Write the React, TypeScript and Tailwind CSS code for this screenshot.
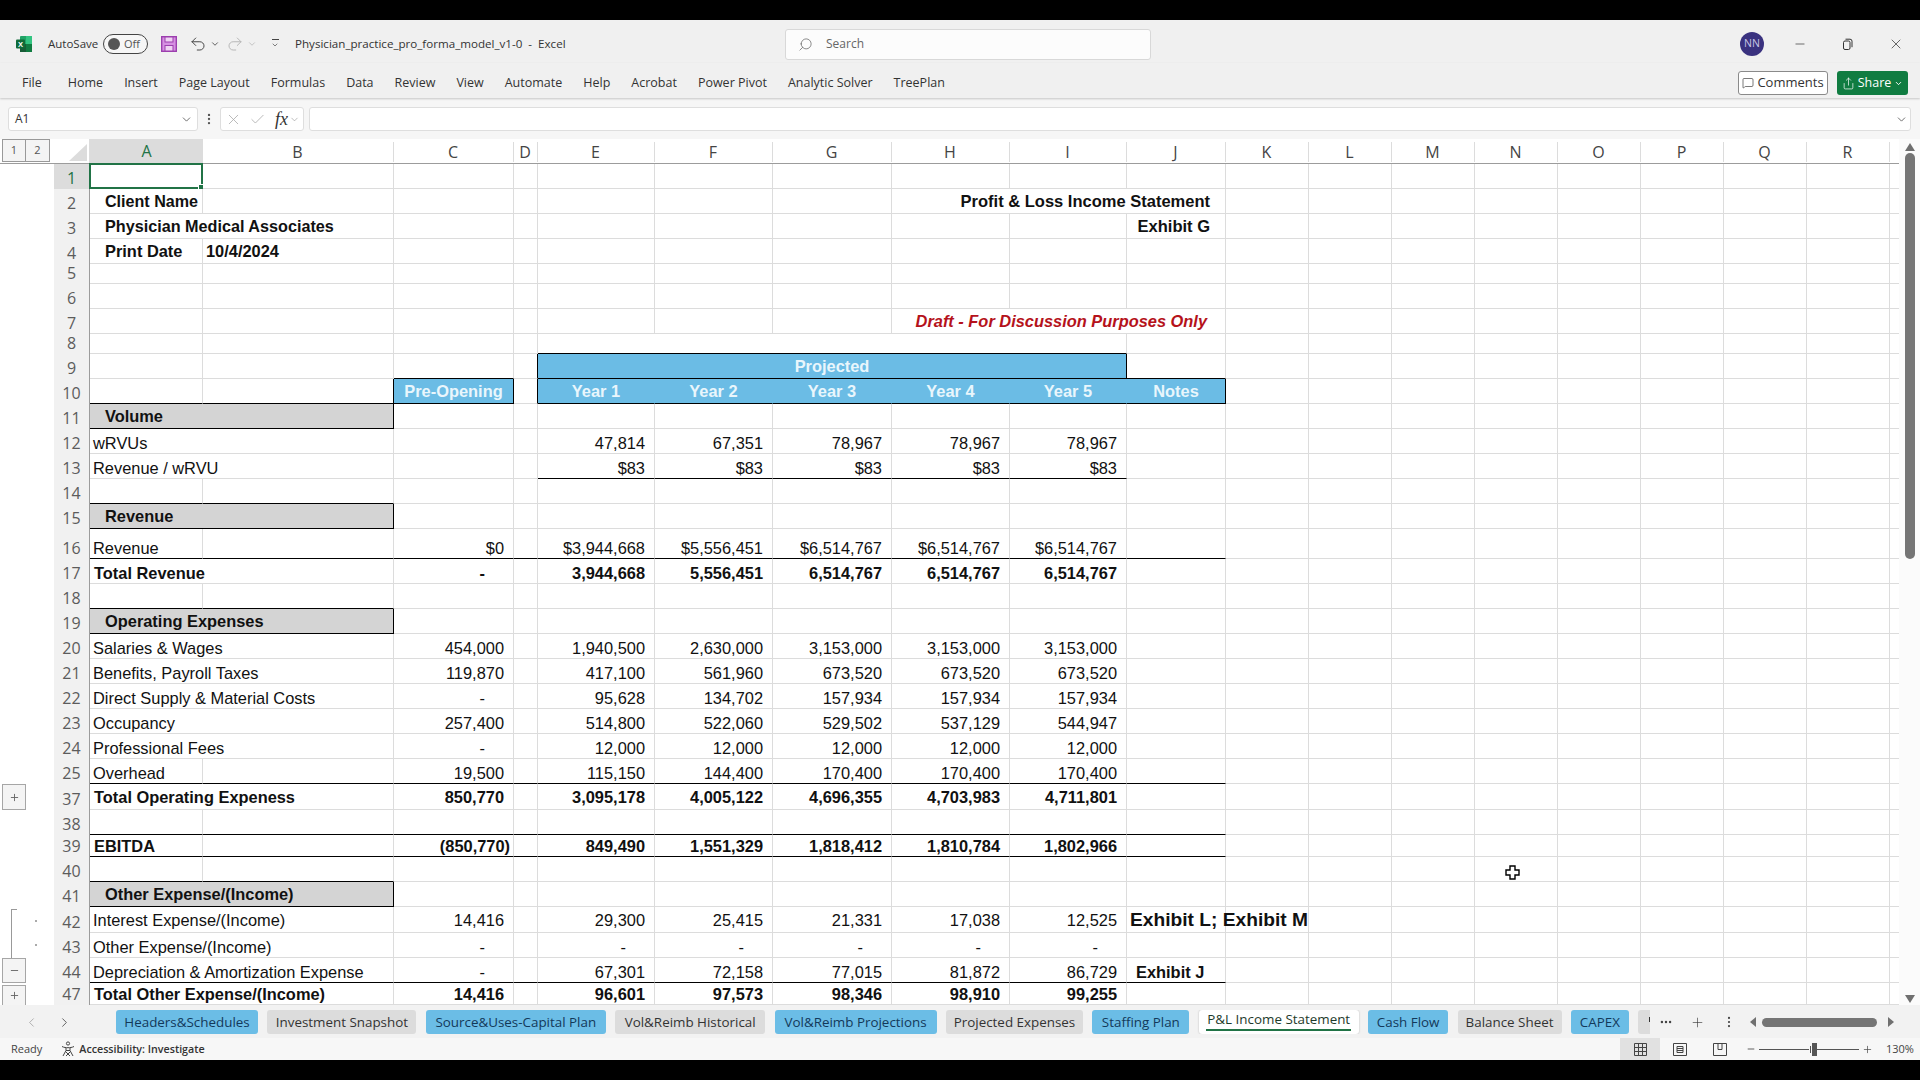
import type { ReactNode } from 'react';
import { Undo2, Redo2, ChevronDown, ChevronLeft, ChevronRight, Search, X, Check, Minus, Plus, MessageSquare, Share, EllipsisVertical, Ellipsis } from 'lucide-react';

const GRID = 'grid grid-cols-[54px_36px_113px_191px_120px_24px_117px_118px_119px_118px_117px_99px_83px_83px_83px_83px_83px_83px_83px_83px_9px]';
const COLS = ['A', 'B', 'C', 'D', 'E', 'F', 'G', 'H', 'I', 'J', 'K', 'L', 'M', 'N', 'O', 'P', 'Q', 'R', '_'];
const SPANS: Record<number, string> = { 2: 'col-span-2', 3: 'col-span-3', 5: 'col-span-5' };

type Cell = { t?: string; span?: number; c?: string };
type Row = {
  n: string;
  h: string;
  label?: string;
  merged?: boolean;
  head?: boolean;
  bold?: boolean;
  center?: boolean;
  vals?: string[]; // C, E, F, G, H, I
  black?: string;
  gutter?: ReactNode;
  cells?: Record<string, Cell>;
};

const BLUE = 'bg-[#6bbce5] text-[#e9f6fc] font-bold justify-center';

function OutlineBtn({ sign, cut }: { sign: string; cut?: boolean }) {
  return (
    <div className={`ml-[2px] w-[24px] ${cut ? 'h-[20px] mt-[2px] border-b-0' : 'h-full'} border border-[#a6a6a6] bg-[#f4f4f4] text-[#666] flex items-center justify-center`}>
      {sign === '+' ? <Plus size={11} strokeWidth={2} /> : <Minus size={11} strokeWidth={2} />}
    </div>
  );
}

function Dot() {
  return <div className="w-[2px] h-[2px] bg-[#aaa]" />;
}

const ROWS: Row[] = [
  { n: '1', h: 'h-[25px]', center: true },
  { n: '2', h: 'h-[25px]', center: true, cells: {
    A: { t: 'Client Name', c: 'font-bold text-[16.1px] pl-[15px]' },
    H: { t: 'Profit & Loss Income Statement', span: 3, c: 'font-bold text-[16.5px] justify-end pr-[15px]' },
  } },
  { n: '3', h: 'h-[25px]', center: true, cells: {
    A: { t: 'Physician Medical Associates', span: 2, c: 'font-bold text-[16.2px] pl-[15px]' },
    J: { t: 'Exhibit G', c: 'font-bold text-[16.5px] justify-end pr-[15px]' },
  } },
  { n: '4', h: 'h-[25px]', center: true, cells: {
    A: { t: 'Print Date', c: 'font-bold pl-[15px]' },
    B: { t: '10/4/2024', c: 'font-bold pl-[3px]' },
  } },
  { n: '5', h: 'h-[20px]' },
  { n: '6', h: 'h-[25px]' },
  { n: '7', h: 'h-[25px]', center: true, cells: {
    H: { t: 'Draft - For Discussion Purposes Only', span: 3, c: 'font-bold italic text-[#b5121b] justify-end pr-[18px]' },
  } },
  { n: '8', h: 'h-[20px]', black: 'E', cells: { E: { span: 5 } } },
  { n: '9', h: 'h-[25px]', center: true, black: 'CJ', cells: {
    D: { c: 'border-r-black' },
    E: { t: 'Projected', span: 5, c: `${BLUE} border-r-black border-b-black` },
  } },
  { n: '10', h: 'h-[25px]', center: true, black: 'AB', cells: {
    B: { c: 'border-r-black' },
    C: { t: 'Pre-Opening', c: `${BLUE} border-r-black border-b-black` },
    D: { c: 'border-r-black' },
    E: { t: 'Year 1', c: `${BLUE} border-r-[#6bbce5] border-b-black` },
    F: { t: 'Year 2', c: `${BLUE} border-r-[#6bbce5] border-b-black` },
    G: { t: 'Year 3', c: `${BLUE} border-r-[#6bbce5] border-b-black` },
    H: { t: 'Year 4', c: `${BLUE} border-r-[#6bbce5] border-b-black` },
    I: { t: 'Year 5', c: `${BLUE} border-r-[#6bbce5] border-b-black` },
    J: { t: 'Notes', c: `${BLUE} border-r-black border-b-black` },
  } },
  { n: '11', h: 'h-[25px]', head: true, center: true, label: 'Volume' },
  { n: '12', h: 'h-[25px]', merged: true, label: 'wRVUs', vals: ['', '47,814', '67,351', '78,967', '78,967', '78,967'] },
  { n: '13', h: 'h-[25px]', merged: true, label: 'Revenue / wRVU', black: 'EFGHI', vals: ['', '$83', '$83', '$83', '$83', '$83'] },
  { n: '14', h: 'h-[25px]', black: 'AB' },
  { n: '15', h: 'h-[25px]', head: true, center: true, label: 'Revenue' },
  { n: '16', h: 'h-[30px]', label: 'Revenue', black: 'ABCDEFGHIJ', vals: ['$0', '$3,944,668', '$5,556,451', '$6,514,767', '$6,514,767', '$6,514,767'] },
  { n: '17', h: 'h-[25px]', merged: true, bold: true, label: 'Total Revenue', vals: ['-', '3,944,668', '5,556,451', '6,514,767', '6,514,767', '6,514,767'] },
  { n: '18', h: 'h-[25px]', black: 'AB' },
  { n: '19', h: 'h-[25px]', head: true, center: true, label: 'Operating Expenses' },
  { n: '20', h: 'h-[25px]', merged: true, label: 'Salaries & Wages', vals: ['454,000', '1,940,500', '2,630,000', '3,153,000', '3,153,000', '3,153,000'] },
  { n: '21', h: 'h-[25px]', merged: true, label: 'Benefits, Payroll Taxes', vals: ['119,870', '417,100', '561,960', '673,520', '673,520', '673,520'] },
  { n: '22', h: 'h-[25px]', merged: true, label: 'Direct Supply & Material Costs', vals: ['-', '95,628', '134,702', '157,934', '157,934', '157,934'] },
  { n: '23', h: 'h-[25px]', merged: true, label: 'Occupancy', vals: ['257,400', '514,800', '522,060', '529,502', '537,129', '544,947'] },
  { n: '24', h: 'h-[25px]', merged: true, label: 'Professional Fees', vals: ['-', '12,000', '12,000', '12,000', '12,000', '12,000'] },
  { n: '25', h: 'h-[25px]', label: 'Overhead', black: 'ABCDEFGHIJ', vals: ['19,500', '115,150', '144,400', '170,400', '170,400', '170,400'] },
  { n: '37', h: 'h-[26px]', merged: true, bold: true, center: true, label: 'Total Operating Expeness', gutter: <OutlineBtn sign="+" />, vals: ['850,770', '3,095,178', '4,005,122', '4,696,355', '4,703,983', '4,711,801'] },
  { n: '38', h: 'h-[25px]', black: 'ABCDEFGHIJ' },
  { n: '39', h: 'h-[22px]', bold: true, label: 'EBITDA', black: 'ABCDEFGHIJ', vals: ['(850,770)', '849,490', '1,551,329', '1,818,412', '1,810,784', '1,802,966'] },
  { n: '40', h: 'h-[25px]', black: 'AB' },
  { n: '41', h: 'h-[25px]', head: true, center: true, label: 'Other Expense/(Income)' },
  { n: '42', h: 'h-[26px]', merged: true, center: true, label: 'Interest Expense/(Income)',
    gutter: (
      <div className="flex h-full">
        <div className="ml-[11px] mt-[2px] w-[6px] border-l border-t border-[#999]" />
        <div className="ml-[18px] mt-[13px]"><Dot /></div>
      </div>
    ),
    vals: ['14,416', '29,300', '25,415', '21,331', '17,038', '12,525'],
    cells: { J: { t: 'Exhibit L; Exhibit M', c: 'font-bold text-[19.2px] pl-[3px] relative z-10' } } },
  { n: '43', h: 'h-[25px]', merged: true, label: 'Other Expense/(Income)',
    gutter: (
      <div className="flex h-full">
        <div className="ml-[11px] w-[6px] border-l border-[#999]" />
        <div className="ml-[18px] mt-[11px]"><Dot /></div>
      </div>
    ),
    vals: ['-', '-', '-', '-', '-', '-'] },
  { n: '44', h: 'h-[25px]', merged: true, label: 'Depreciation & Amortization Expense', black: 'ABCDEFGHIJ', gutter: <OutlineBtn sign="-" />,
    vals: ['-', '67,301', '72,158', '77,015', '81,872', '86,729'],
    cells: { J: { t: 'Exhibit J', c: 'font-bold pl-[9px]' } } },
  { n: '47', h: 'h-[22px]', merged: true, bold: true, center: true, label: 'Total Other Expense/(Income)', gutter: <OutlineBtn sign="+" cut />, vals: ['14,416', '96,601', '97,573', '98,346', '98,910', '99,255'] },
];

function numCell(v: string): Cell {
  if (v === '-') return { t: v, c: 'justify-end pr-[28px]' };
  if (v.startsWith('(')) return { t: v, c: 'justify-end pr-[3px]' };
  return { t: v, c: 'justify-end pr-[9px]' };
}

function buildCells(row: Row): Record<string, Cell> {
  const cells: Record<string, Cell> = {};
  if (row.label) {
    if (row.head) {
      cells.A = { t: row.label, span: 2, c: 'bg-[#d4d4d4] font-bold pl-[15px] border-r-black border-b-black' };
    } else {
      cells.A = { t: row.label, span: row.merged ? 2 : undefined, c: row.bold ? 'pl-[4px]' : 'pl-[3px]' };
    }
  }
  if (row.vals) {
    const targets = ['C', 'E', 'F', 'G', 'H', 'I'];
    row.vals.forEach((v, i) => {
      if (v) cells[targets[i]] = numCell(v);
    });
  }
  return { ...cells, ...row.cells };
}

function SheetRow({ row }: { row: Row }) {
  const cells = buildCells(row);
  let skip = 0;
  const selected = row.n === '1';
  return (
    <div className={`${GRID} ${row.h} font-['Liberation_Sans',Arial,sans-serif] text-[16.4px] leading-[18px] text-[#111] ${row.bold ? 'font-bold' : ''}`}>
      <div className="h-full bg-white">{row.gutter}</div>
      <div className={`flex items-end justify-center pb-[1px] border-r border-[#9c9c9c] font-['Open_Sans',sans-serif] font-normal text-[16px] leading-[19px] ${selected ? 'bg-[#dcdcdc] text-[#217346]' : 'bg-[#f1f1f1] text-[#5c5c5c]'}`}>
        {row.n}
      </div>
      {COLS.map((col) => {
        if (skip > 0) {
          skip -= 1;
          return null;
        }
        const cell = cells[col];
        if (cell?.span) skip = cell.span - 1;
        const last = col === '_';
        const blackB = row.black?.includes(col) ? 'border-b-black' : '';
        const isA1 = selected && col === 'A';
        return (
          <div
            key={col}
            className={`relative flex min-w-0 whitespace-nowrap border-b border-[#dcdcdc] ${last ? '' : 'border-r'} ${row.center ? 'items-center' : 'items-end pb-[1px]'} ${cell?.span ? SPANS[cell.span] : ''} ${blackB} ${cell?.c ?? ''}`}
          >
            {cell?.t}
            {isA1 && (
              <div className="absolute -left-px -top-px w-[114px] h-[26px] border-2 border-[#217346]">
                <div className="absolute -right-[3px] -bottom-[3px] w-[6px] h-[6px] bg-[#217346] border border-white" />
              </div>
            )}
          </div>
        );
      })}
    </div>
  );
}

function ColumnHeader() {
  const letters = COLS.slice(0, 18);
  return (
    <div className={`${GRID} h-[25px] bg-white border-b border-[#9c9c9c] font-['Open_Sans',sans-serif] text-[16px] text-[#444]`}>
      <div className="flex pl-[2px]">
        <div className="w-[24px] h-[23px] border border-[#999] bg-[#f4f4f4] flex items-center justify-center text-[11px] text-[#555]">1</div>
        <div className="w-[24px] h-[23px] border border-l-0 border-[#999] bg-[#f4f4f4] flex items-center justify-center text-[11px] text-[#555]">2</div>
      </div>
      <div className="flex justify-end items-end pr-[2px] pb-[2px] border-r border-[#dcdcdc]">
        <svg width="18" height="17" viewBox="0 0 18 17"><path d="M18 0V17H0Z" fill="#dcdcdc" /></svg>
      </div>
      {letters.map((l) =>
        l === 'A' ? (
          <div key={l} className="flex items-center justify-center bg-[#dcdcdc] text-[#217346]">A</div>
        ) : (
          <div key={l} className="mt-[3px] h-[20px] flex items-center justify-center pr-[1px] border-r border-[#dcdcdc]">{l}</div>
        ),
      )}
      <div />
    </div>
  );
}

function ExcelLogo() {
  return (
    <svg width="16" height="16" viewBox="0 0 16 16" className="shrink-0">
      <rect x="4" y="0" width="12" height="16" rx="1" fill="#21a366" />
      <rect x="10" y="0" width="6" height="8" fill="#33c481" />
      <rect x="10" y="8" width="6" height="8" fill="#107c41" />
      <rect x="4" y="8" width="6" height="8" fill="#185c37" />
      <rect x="0" y="3.5" width="9" height="9" rx="1" fill="#0f6b38" />
      <text x="4.5" y="10.6" textAnchor="middle" fontSize="7.5" fontWeight="700" fill="#fff" fontFamily="Liberation Sans">X</text>
    </svg>
  );
}

function SaveIcon() {
  return (
    <svg width="16" height="16" viewBox="0 0 16 16" className="shrink-0">
      <rect x="0.7" y="0.7" width="14.6" height="14.6" fill="#d690e2" stroke="#9c3fae" strokeWidth="1.4" />
      <rect x="4" y="1" width="8" height="5" fill="#efd2f3" stroke="#9c3fae" />
      <rect x="4" y="9.5" width="8" height="5.5" fill="#efd2f3" stroke="#9c3fae" />
    </svg>
  );
}

function AccessIcon() {
  return (
    <svg width="16" height="16" viewBox="0 0 16 16" fill="none" stroke="#444" strokeWidth="1" className="shrink-0">
      <circle cx="8" cy="2.5" r="1.6" />
      <path d="M2 5.5c2 1 4 1.2 6 1.2s4-.2 6-1.2M6 7v2.5L3 15M10 7v2.5l3 5.5M6 9.5h4M6 15l4-4M10 15l-4-4" />
    </svg>
  );
}

const RIBBON = ['Home', 'Insert', 'Page Layout', 'Formulas', 'Data', 'Review', 'View', 'Automate', 'Help', 'Acrobat', 'Power Pivot', 'Analytic Solver', 'TreePlan'];

const TABS = [
  { t: 'Headers&Schedules', w: 'w-[142px]', blue: true },
  { t: 'Investment Snapshot', w: 'w-[149px]' },
  { t: 'Source&Uses-Capital Plan', w: 'w-[180px]', blue: true },
  { t: 'Vol&Reimb Historical', w: 'w-[150px]' },
  { t: 'Vol&Reimb Projections', w: 'w-[162px]', blue: true },
  { t: 'Projected Expenses', w: 'w-[137px]' },
  { t: 'Staffing Plan', w: 'w-[97px]', blue: true },
  { t: 'P&L Income Statement', w: 'w-[160px]', active: true },
  { t: 'Cash Flow', w: 'w-[80px]', blue: true },
  { t: 'Balance Sheet', w: 'w-[104px]' },
  { t: 'CAPEX', w: 'w-[58px]', blue: true },
];

export default function App() {
  return (
    <div className="relative w-[1920px] h-[1080px] bg-black flex flex-col overflow-hidden font-['Open_Sans',sans-serif] text-[#333]">
      <div className="h-[20px] shrink-0" />

      {/* title bar */}
      <div className="h-[43px] shrink-0 bg-[#f0f0f0] flex items-center pt-[5px] text-[12px]">
        <div className="ml-[16px]"><ExcelLogo /></div>
        <span className="ml-[16px] w-[50px] text-[11.5px]">AutoSave</span>
        <div className="ml-[5px] w-[45px] h-[20px] border border-[#444] rounded-full flex items-center pl-[4px] gap-[4px] bg-white/40">
          <div className="w-[12px] h-[12px] rounded-full bg-[#555]" />
          <span className="text-[11px] text-[#555]">Off</span>
        </div>
        <div className="ml-[13px]"><SaveIcon /></div>
        <Undo2 size={18} strokeWidth={1.3} className="ml-[12px] text-[#444]" />
        <ChevronDown size={10} className="ml-[3px] text-[#444]" />
        <Redo2 size={18} strokeWidth={1.3} className="ml-[6px] text-[#b5b5b5]" />
        <ChevronDown size={10} className="ml-[3px] text-[#bbb]" />
        <div className="ml-[14px] flex flex-col items-center w-[8px] gap-[1px]">
          <div className="w-[7px] h-px bg-[#444]" />
          <ChevronDown size={8} strokeWidth={2} className="text-[#444]" />
        </div>
        <span className="ml-[16px] w-[340px] whitespace-nowrap text-[11.6px] text-[#333]">Physician_practice_pro_forma_model_v1-0&nbsp; -&nbsp; Excel</span>
        <div className="ml-[150px] w-[366px] h-[31px] bg-white/80 border border-[#d8d8d8] rounded-[3px] flex items-center pl-[12px] text-[#666]">
          <Search size={15} strokeWidth={1.2} className="-scale-x-100" />
          <span className="ml-[13px] text-[12px]">Search</span>
        </div>
        <div className="ml-[589px] w-[24px] h-[24px] rounded-full bg-[#3a327f] text-[#c9c6e6] text-[10.5px] flex items-center justify-center">NN</div>
        <Minus size={14} strokeWidth={1.2} className="ml-[29px] text-[#333]" />
        <svg width="12" height="12" viewBox="0 0 12 12" className="ml-[35px] text-[#333]" fill="none" stroke="currentColor">
          <rect x="1.5" y="3" width="6.5" height="8.5" rx="1.5" />
          <path d="M3.5 1.2h4.5a2 2 0 0 1 2 2v6" />
        </svg>
        <X size={16} strokeWidth={1.1} className="ml-[34px] text-[#333]" />
      </div>

      {/* ribbon tabs */}
      <div className="h-[35px] shrink-0 bg-[#f0f0f0] flex items-center pt-[5px] text-[12.5px] text-[#333] shadow-[0_1px_2px_rgba(0,0,0,0.2)] relative z-20">
        <span className="ml-[22px]">File</span>
        <div className="ml-[26px] flex gap-[21px] whitespace-nowrap">
          {RIBBON.map((t) => <span key={t}>{t}</span>)}
        </div>
        <div className="ml-auto flex gap-[9px] mr-[12px]">
          <div className="w-[90px] h-[24px] bg-white border border-[#8a8a8a] rounded-[3px] flex items-center justify-center gap-[3px]">
            <MessageSquare size={12} strokeWidth={1.3} />
            <span className="text-[13px]">Comments</span>
          </div>
          <div className="w-[71px] h-[24px] bg-[#107c41] text-white rounded-[3px] flex items-center justify-center gap-[3px]">
            <Share size={13} strokeWidth={1.3} />
            <span>Share</span>
            <ChevronDown size={9} strokeWidth={2.5} />
          </div>
        </div>
      </div>

      {/* formula bar */}
      <div className="h-[41px] shrink-0 bg-[#f6f6f6] flex items-center pt-[1px] pl-[8px] pr-[9px] text-[12px]">
        <div className="w-[190px] h-[24px] bg-white border border-[#dedede] rounded-[3px] flex items-center justify-between pl-[6px] pr-[4px]">
          <span>A1</span>
          <ChevronDown size={13} strokeWidth={1.4} className="text-[#444]" />
        </div>
        <EllipsisVertical size={14} className="mx-[4px] text-[#555]" />
        <div className="w-[84px] h-[24px] bg-white border border-[#dedede] rounded-[3px] flex items-center pl-[4px] gap-[7px] text-[#a8a8a8]">
          <X size={17} strokeWidth={1.1} />
          <Check size={17} strokeWidth={1.1} />
          <span className="ml-[2px] font-['Liberation_Serif',serif] italic text-[18px] text-[#333]">fx</span>
          <ChevronDown size={11} strokeWidth={1.2} className="-ml-[6px] text-[#888]" />
        </div>
        <div className="ml-[5px] flex-1 h-[24px] bg-white border border-[#dedede] rounded-[3px] flex items-center justify-end pr-[2px]">
          <ChevronDown size={13} strokeWidth={1.4} className="text-[#444]" />
        </div>
      </div>

      {/* sheet */}
      <div className="h-[866px] shrink-0 flex bg-white overflow-hidden">
        <div className="w-[1899px] shrink-0">
          <ColumnHeader />
          {ROWS.map((r) => <SheetRow key={r.n} row={r} />)}
        </div>
        <div className="flex-1 flex flex-col items-center bg-[#fbfbfb] pt-[4px]">
          <svg width="10" height="8" viewBox="0 0 10 8"><path d="M5 0l5 8H0z" fill="#707070" /></svg>
          <div className="mt-[2px] w-[10px] h-[406px] rounded-full bg-[#757575]" />
          <div className="flex-1" />
          <svg width="10" height="8" viewBox="0 0 10 8" className="mb-[2px]"><path d="M5 8l5-8H0z" fill="#707070" /></svg>
        </div>
      </div>

      {/* sheet tabs */}
      <div className="h-[33px] shrink-0 bg-[#f2f2f2] flex items-center pt-[1px] text-[13.4px] whitespace-nowrap">
        <ChevronLeft size={15} strokeWidth={1} className="ml-[24px] text-[#888]" />
        <ChevronRight size={15} strokeWidth={1.2} className="ml-[18px] text-[#333]" />
        <div className="ml-[44px] flex gap-[9.4px] w-[1534px] overflow-hidden">
          {TABS.map((tab) => (
            <div
              key={tab.t}
              className={`${tab.w} h-[24px] shrink-0 rounded-[3px] flex items-center justify-center ${tab.active ? 'bg-white shadow-[0_0_2px_rgba(0,0,0,0.25)] flex-col text-[#1e3a2b]' : tab.blue ? 'bg-[#6bbde6] text-[#13395a]' : 'bg-[#dcdcdc] text-[#333]'}`}
            >
              {tab.active ? (
                <>
                  <span className="-mt-[3px] leading-[18px]">{tab.t}</span>
                  <div className="mt-[1px] w-[145px] h-[2px] bg-[#217346]" />
                </>
              ) : tab.t}
            </div>
          ))}
          <div className="w-[12px] h-[24px] shrink-0 bg-[#dcdcdc] rounded-l-[3px] flex justify-end pt-[7px]">
            <div className="w-px h-[5px] bg-[#333]" />
          </div>
        </div>
        <Ellipsis size={14} strokeWidth={2.2} className="ml-[9px] text-[#444]" />
        <Plus size={15} strokeWidth={1} className="ml-[17px] text-[#333]" />
        <EllipsisVertical size={14} strokeWidth={1.8} className="ml-[17px] text-[#444]" />
        <svg width="6" height="10" viewBox="0 0 6 10" className="ml-[14px]"><path d="M0 5l6-5v10z" fill="#707070" /></svg>
        <div className="ml-[6px] w-[115px] h-[9px] rounded-full bg-[#757575]" />
        <svg width="6" height="10" viewBox="0 0 6 10" className="ml-[11px]"><path d="M6 5L0 0v10z" fill="#707070" /></svg>
      </div>

      {/* status bar */}
      <div className="h-[22px] shrink-0 bg-[#f7f7f7] flex items-center text-[11px] text-[#444]">
        <span className="ml-[11px]">Ready</span>
        <div className="ml-[18px]"><AccessIcon /></div>
        <span className="ml-[3px] font-semibold text-[10.7px] text-[#333]">Accessibility: Investigate</span>
        <div className="ml-auto w-[300px] h-full flex items-center">
          <div className="w-[40px] h-full bg-[#e1e1e1] flex items-center justify-center">
            <svg width="13" height="13" viewBox="0 0 13 13" fill="none" stroke="#444"><path d="M.5.5h12v12H.5zM.5 4.5h12M.5 8.5h12M4.5.5v12M8.5.5v12" /></svg>
          </div>
          <svg width="14" height="13" viewBox="0 0 14 13" fill="none" stroke="#444" className="ml-[13px]"><path d="M.5.5h13v12H.5zM4 3.5h6v6H4zM4 5.5h6M4 7.5h6" /></svg>
          <svg width="14" height="13" viewBox="0 0 14 13" fill="none" stroke="#444" className="ml-[26px]"><path d="M.5.5h13v12H.5zM5 .5v6h4V.5" /></svg>
          <Minus size={10} className="ml-[19px]" />
          <div className="ml-[3px] w-[100px] flex items-center">
            <div className="w-[50px] h-px bg-[#555]" />
            <div className="w-[2px] h-[7px] border-r border-[#555]" />
            <div className="ml-px w-[5px] h-[13px] bg-[#555]" />
            <div className="flex-1 h-px bg-[#555]" />
          </div>
          <Plus size={11} strokeWidth={1.5} className="ml-[3px]" />
          <span className="ml-[13px] text-[11px]">130%</span>
        </div>
      </div>

      <div className="flex-1" />

      {/* mouse pointer */}
      <svg width="15" height="15" viewBox="0 0 15 15" className="absolute left-[1505px] top-[865px] z-30">
        <path d="M5 1h5v4h4v5h-4v4H5v-4H1V5h4z" fill="#fff" stroke="#000" strokeWidth="1.4" />
      </svg>
    </div>
  );
}
